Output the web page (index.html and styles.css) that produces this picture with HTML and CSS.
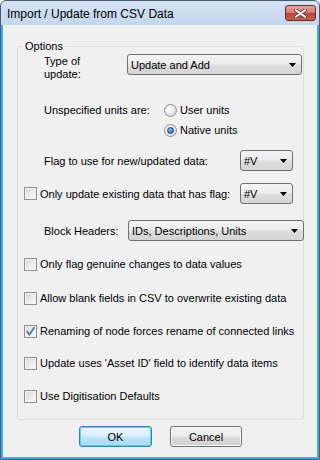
FILE: index.html
```html
<!DOCTYPE html>
<html>
<head>
<meta charset="utf-8">
<link rel="stylesheet" href="styles.css">
</head>
<body>
<div class="window">
  <div class="titlebar">
    <span class="title">Import / Update from CSV Data</span>
    <div class="close">
      <svg width="13" height="9" viewBox="0 0 13 9"><path d="M2 1.2 L11 7.8 M11 1.2 L2 7.8" stroke="#5e3a37" stroke-width="3.6" stroke-linecap="round"/><path d="M2 1.2 L11 7.8 M11 1.2 L2 7.8" stroke="#ffffff" stroke-width="2" stroke-linecap="round"/></svg>
    </div>
  </div>
  <div class="client">
    <fieldset class="group">
      <legend class="legend">Options</legend>
      <div class="row row-type">
        <div class="lbl lbl-type">Type of<br>update:</div>
        <div class="combo combo-type"><span class="combo-text">Update and Add</span><svg class="arrow" width="7" height="4" viewBox="0 0 7 4"><path d="M0 0 H7 L3.5 4 Z" fill="#000"/></svg></div>
      </div>
      <div class="row row-units">
        <div class="lbl lbl-units">Unspecified units are:</div>
        <div class="radios">
          <div class="radio-item"><span class="radio"></span><span>User units</span></div>
          <div class="radio-item"><span class="radio radio-on"><span class="dot"></span></span><span>Native units</span></div>
        </div>
      </div>
      <div class="row row-flag">
        <div class="lbl lbl-flag">Flag to use for new/updated data:</div>
        <div class="combo combo-small"><span class="combo-text">#V</span><svg class="arrow" width="7" height="4" viewBox="0 0 7 4"><path d="M0 0 H7 L3.5 4 Z" fill="#000"/></svg></div>
      </div>
      <div class="row row-only">
        <span class="check"></span>
        <span class="cb-text cb-text-only">Only update existing data that has flag:</span>
        <div class="combo combo-small"><span class="combo-text">#V</span><svg class="arrow" width="7" height="4" viewBox="0 0 7 4"><path d="M0 0 H7 L3.5 4 Z" fill="#000"/></svg></div>
      </div>
      <div class="row row-block">
        <div class="lbl lbl-block">Block Headers:</div>
        <div class="combo combo-block"><span class="combo-text">IDs, Descriptions, Units</span><svg class="arrow" width="7" height="4" viewBox="0 0 7 4"><path d="M0 0 H7 L3.5 4 Z" fill="#000"/></svg></div>
      </div>
      <div class="row crow crow-1"><span class="check"></span><span class="cb-text">Only flag genuine changes to data values</span></div>
      <div class="row crow crow-2"><span class="check"></span><span class="cb-text">Allow blank fields in CSV to overwrite existing data</span></div>
      <div class="row crow crow-3"><span class="check check-on"><svg width="11" height="11" viewBox="0 0 11 11"><path d="M2.2 5.6 L4.6 8.6 L9 1.8" fill="none" stroke="#3a5d9c" stroke-width="1.7" stroke-linecap="round" stroke-linejoin="round"/><path d="M2.2 5.6 L4.6 8.6 L9 1.8" fill="none" stroke="#7ea3dc" stroke-width="0.6" stroke-linecap="round" stroke-linejoin="round"/></svg></span><span class="cb-text">Renaming of node forces rename of connected links</span></div>
      <div class="row crow crow-4"><span class="check"></span><span class="cb-text">Update uses 'Asset ID' field to identify data items</span></div>
      <div class="row crow crow-5"><span class="check"></span><span class="cb-text">Use Digitisation Defaults</span></div>
    </fieldset>
    <div class="buttons">
      <div class="btn btn-default">OK</div>
      <div class="btn">Cancel</div>
    </div>
  </div>
</div>
</body>
</html>
```
FILE: styles.css
```css
html, body {
  margin: 0;
  padding: 0;
}
body {
  width: 320px;
  height: 460px;
  font-family: "Liberation Sans", Arial, sans-serif;
  font-size: 11px;
  color: #000;
  background: #ffffff;
}
.window {
  width: 320px;
  height: 460px;
  box-sizing: border-box;
  border: 1px solid #4a5a6e;
  border-radius: 6px 6px 0 0;
  background: #3aaee4;
  display: flex;
  flex-direction: column;
  overflow: hidden;
}
.titlebar {
  height: 24px;
  flex: none;
  display: flex;
  align-items: flex-start;
  background: linear-gradient(#d5e3f3, #c3d6ec);
  padding-left: 6px;
}
.title {
  font-size: 12px;
  line-height: 14px;
  margin-top: 6px;
  color: #000;
}
.close {
  margin-left: auto;
  margin-right: 3px;
  margin-top: 4px;
  width: 31px;
  height: 16px;
  box-sizing: border-box;
  border: 1px solid #6e2b26;
  border-radius: 3px;
  background: linear-gradient(#e3a49b 0%, #d57e72 45%, #c1453a 55%, #cc5b4f 100%);
  display: flex;
  align-items: center;
  justify-content: center;
}
.client {
  flex: 1;
  margin: 0 2px 2px 2px;
  background: #f0f0f0;
  display: flex;
  flex-direction: column;
}
.group {
  margin: 15px 13px 0 14px;
  padding: 0 0 15px 0;
  border: 1px solid #d5dfe5;
  border-radius: 3px;
  min-width: 0;
}
.legend {
  margin-left: 5px;
  padding: 0 2px;
  line-height: 13px;
}
.row {
  display: flex;
  align-items: center;
}
.lbl {
  flex: none;
  padding-left: 26px;
  box-sizing: border-box;
}
.row-type {
  margin-top: 1px;
  height: 27px;
  align-items: flex-start;
}
.lbl-type {
  width: 109px;
  line-height: 13px;
  padding-top: 1px;
}
.combo {
  flex: none;
  height: 21px;
  box-sizing: border-box;
  border: 1px solid #707070;
  border-radius: 3px;
  background: linear-gradient(#f3f3f3 0%, #ececec 48%, #dedede 52%, #d3d3d3 100%);
  display: flex;
  align-items: center;
  padding-left: 3px;
  padding-right: 5px;
}
.combo-text {
  flex: 1;
  white-space: nowrap;
}
.arrow {
  flex: none;
}
.combo-type {
  width: 175px;
}
.row-units {
  margin-top: 19px;
  height: 40px;
  align-items: flex-start;
}
.lbl-units {
  width: 146px;
  line-height: 20px;
}
.radios {
  display: flex;
  flex-direction: column;
}
.radio-item {
  height: 20px;
  display: flex;
  align-items: center;
  gap: 3px;
}
.radio {
  width: 13px;
  height: 13px;
  box-sizing: border-box;
  border-radius: 50%;
  border: 1px solid #8e8f8f;
  background: radial-gradient(circle at 35% 35%, #ffffff 0%, #e6e6e6 50%, #cfcfcf 100%);
  display: flex;
  align-items: center;
  justify-content: center;
}
.dot {
  width: 7px;
  height: 7px;
  border-radius: 50%;
  box-sizing: border-box;
  border: 1px solid #1c4c7e;
  background: radial-gradient(circle at 40% 35%, #9fd7f6 0%, #3a8fd0 45%, #174c85 100%);
}
.row-flag {
  margin-top: 10px;
  height: 21px;
}
.lbl-flag {
  width: 222px;
}
.combo-small {
  width: 53px;
}
.row-only {
  margin-top: 12px;
  height: 21px;
  padding-left: 6px;
}
.check {
  flex: none;
  width: 13px;
  height: 13px;
  box-sizing: border-box;
  border: 1px solid #8e8f8f;
  background: linear-gradient(135deg, #d6d6d6 0%, #eeeeee 60%, #fbfbfb 100%);
  box-shadow: inset 0 0 0 1px #f4f4f4;
  display: flex;
  align-items: center;
  justify-content: center;
}
.check-on {
  background: linear-gradient(135deg, #dadada 0%, #f1f1f1 60%, #fcfcfc 100%);
}
.cb-text {
  margin-left: 3px;
  white-space: nowrap;
}
.cb-text-only {
  width: 200px;
  flex: none;
}
.row-block {
  margin-top: 16px;
  height: 21px;
}
.lbl-block {
  width: 110px;
}
.combo-block {
  width: 176px;
}
.crow {
  height: 16px;
  padding-left: 6px;
}
.crow-1 { margin-top: 15px; }
.crow-2 { margin-top: 18px; }
.crow-3 { margin-top: 17px; }
.crow-4 { margin-top: 16px; }
.crow-5 { margin-top: 17px; }
.buttons {
  display: flex;
  justify-content: center;
  gap: 18px;
  margin-top: 6px;
  padding-left: 1px;
}
.btn {
  width: 72px;
  height: 21px;
  box-sizing: border-box;
  border: 1px solid #707070;
  border-radius: 3px;
  background: linear-gradient(#f2f2f2 0%, #ebebeb 48%, #dddddd 52%, #cfcfcf 100%);
  box-shadow: inset 0 0 0 1px #fbfbfb;
  display: flex;
  align-items: center;
  justify-content: center;
}
.btn-default {
  width: 73px;
  border-color: #3c7fb1;
  background: linear-gradient(#eaf6fd 0%, #d9f0fc 48%, #bee6fd 52%, #a7d9f5 100%);
  box-shadow: inset 0 0 0 1px #48d8fb;
}
```
